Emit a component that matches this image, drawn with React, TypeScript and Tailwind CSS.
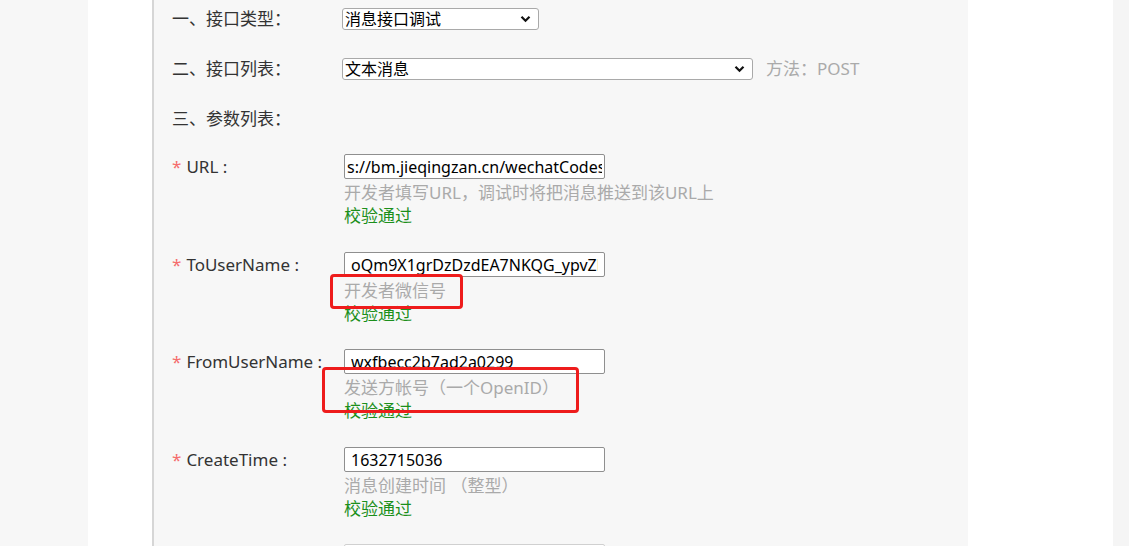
import React from 'react';

const font = { fontFamily: '"Noto Sans", "Noto Sans CJK SC", sans-serif' };

const Select = ({ value, width }: { value: string; width: string }) => (
  <div
    className={`flex h-[22px] items-center justify-between rounded-[3px] border border-[#a9a9a9] bg-white pl-[2px] pr-[7px] text-[16px] leading-none text-black ${width}`}
  >
    <span>{value}</span>
    <svg width="11" height="8" viewBox="0 0 11 8">
      <path d="M1.5 1.8 L5.5 5.8 L9.5 1.8" fill="none" stroke="#111" strokeWidth="2.2" />
    </svg>
  </div>
);

interface FieldProps {
  label: string;
  value: string;
  help: string;
  mt: string;
  pad?: string;
  mark?: 'a' | 'b';
}

const Field = ({ label, value, help, mt, pad = 'px-[6px]', mark }: FieldProps) => (
  <div className={`flex ${mt}`}>
    <div className="flex h-[25px] w-[172px] items-center text-[17px] leading-[25px] text-[#333]">
      <span className="mr-[5px] text-[#f56c6c]">*</span>
      {label}
    </div>
    <div className="relative">
      <input
        readOnly
        value={value}
        className={`block h-[25px] w-[261px] rounded-[2px] border border-[#8f8f8f] bg-white text-[16px] text-black outline-none ${pad}`}
      />
      <div className="mt-[2px] text-[17px] leading-[23px] text-[#aaa]">{help}</div>
      <div className="text-[17px] leading-[23px] text-[#1b8f1b]">校验通过</div>
      {mark === 'a' && (
        <div className="absolute left-[-14px] top-[22px] h-[35px] w-[133px] rounded-[4px] border-[3px] border-[#ee1c1c]" />
      )}
      {mark === 'b' && (
        <div className="absolute left-[-22px] top-[18px] h-[46px] w-[257px] rounded-[4px] border-[3px] border-[#ee1c1c]" />
      )}
    </div>
  </div>
);

export default function App() {
  return (
    <div className="flex h-[546px] w-full overflow-hidden bg-white" style={font}>
      <div className="w-[88px] shrink-0 bg-[#f7f7f7]" />
      <div className="w-[64px] shrink-0 bg-white" />
      <div className="w-[2px] shrink-0 bg-[#d6d6d6]" />
      <div className="w-[814px] shrink-0 bg-[#f7f7f7] pl-[18px]">
        <div className="mt-[8px] flex h-[22px] items-center">
          <div className="w-[170px] text-[17px] leading-[22px] text-[#333]">一、接口类型：</div>
          <Select value="消息接口调试" width="w-[197px]" />
        </div>
        <div className="mt-[28px] flex h-[22px] items-center">
          <div className="w-[170px] text-[17px] leading-[22px] text-[#333]">二、接口列表：</div>
          <Select value="文本消息" width="w-[411px]" />
          <span className="ml-[13px] text-[17px] leading-[22px] text-[#aaa]">方法：POST</span>
        </div>
        <div className="mt-[27px] h-[24px] text-[17px] leading-[24px] text-[#333]">三、参数列表：</div>
        <Field
          mt="mt-[23px]"
          label="URL :"
          value="s://bm.jieqingzan.cn/wechatCodes"
          pad="px-[2px]"
          help="开发者填写URL，调试时将把消息推送到该URL上"
        />
        <Field
          mt="mt-[25px]"
          label="ToUserName :"
          value="oQm9X1grDzDzdEA7NKQG_ypvZk8"
          help="开发者微信号"
          mark="a"
        />
        <Field
          mt="mt-[24px]"
          label="FromUserName :"
          value="wxfbecc2b7ad2a0299"
          help="发送方帐号（一个OpenID）"
          mark="b"
        />
        <Field
          mt="mt-[25px]"
          label="CreateTime :"
          value="1632715036"
          help="消息创建时间 （整型）"
        />
        <div className="ml-[172px] mt-[24px] h-[25px] w-[261px] rounded-[2px] border border-[#d0d0d0] bg-white" />
      </div>
      <div className="w-[145px] shrink-0 bg-white" />
      <div className="flex-1 bg-[#f5f5f5]" />
    </div>
  );
}
